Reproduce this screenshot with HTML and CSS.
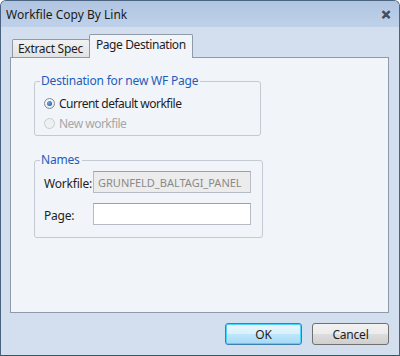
FILE: index.html
```html
<!DOCTYPE html>
<html>
<head>
<meta charset="utf-8">
<link rel="stylesheet" href="styles.css">
</head>
<body>
<div class="window">
  <div class="titlebar">
    <span class="title">Workfile Copy By Link</span>
    <span class="close">&#x2715;</span>
  </div>
  <div class="body">
    <div class="tabs">
      <div class="tab">Extract Spec</div>
      <div class="tab active">Page Destination</div>
    </div>
    <div class="panel">
      <div class="group g1">
        <div class="legend">Destination for new WF Page</div>
        <div class="radio-row">
          <span class="radio checked"><span class="dot"></span></span>
          <span class="rlabel">Current default workfile</span>
        </div>
        <div class="radio-row disabled">
          <span class="radio"></span>
          <span class="rlabel">New workfile</span>
        </div>
      </div>
      <div class="group g2">
        <div class="legend">Names</div>
        <div class="field-row">
          <span class="flabel">Workfile:</span>
          <span class="input readonly">GRUNFELD_BALTAGI_PANEL</span>
        </div>
        <div class="field-row">
          <span class="flabel">Page:</span>
          <span class="input"></span>
        </div>
      </div>
    </div>
    <div class="buttons">
      <div class="btn default">OK</div>
      <div class="btn">Cancel</div>
    </div>
  </div>
</div>
</body>
</html>
```
FILE: styles.css
```css
html, body {
  margin: 0;
  padding: 0;
  background: #ffffff;
}
body {
  font-family: "Noto Sans", "Open Sans", sans-serif;
  font-size: 12px;
  color: #1e1e1e;
}
.window {
  width: 400px;
  height: 356px;
  box-sizing: border-box;
  border: 1px solid #4a6480;
  border-bottom-color: #2e5a60;
  border-radius: 6px 6px 0 0;
  background: #d3dfef;
  display: flex;
  flex-direction: column;
  overflow: hidden;
}
.titlebar {
  height: 26px;
  flex: none;
  display: flex;
  align-items: center;
  justify-content: space-between;
  padding: 0 8px 0 5px;
  background: linear-gradient(to bottom, #b0c5e1, #bfd1ea);
}
.title {
  font-size: 12px;
  color: #1a1a1a;
}
.close {
  font-size: 12px;
  font-weight: bold;
  color: #3f5068;
  -webkit-text-stroke: 0.6px #3f5068;
}
.body {
  flex: 1;
  display: flex;
  flex-direction: column;
  padding: 7px 10px 0 9px;
}
.tabs {
  display: flex;
  align-items: flex-end;
  height: 23px;
  padding-left: 2px;
  position: relative;
  z-index: 1;
}
.tab {
  height: 18px;
  box-sizing: border-box;
  padding: 0 6px 0 5px;
  border: 1px solid #8e9aa8;
  border-bottom: none;
  border-radius: 2px 2px 0 0;
  background: linear-gradient(to bottom, #f2f2f2, #e2e2e2);
  display: flex;
  align-items: center;
  letter-spacing: -0.3px;
}
.tab.active {
  height: 24px;
  margin-bottom: -1px;
  padding: 0 6px 4px 6px;
  background: #f1f4f9;
  margin-left: -1px;
  letter-spacing: -0.4px;
}
.panel {
  height: 256px;
  box-sizing: border-box;
  border: 1px solid #8e9aa8;
  background: #f1f4f9;
  padding: 23px 0 0 23px;
  display: flex;
  flex-direction: column;
  gap: 24px;
}
.group {
  position: relative;
  box-sizing: border-box;
  border: 1px solid #c3cad4;
  border-radius: 3px;
  background: #f1f4f9;
}
.g1 {
  width: 227px;
  height: 55px;
  padding: 11px 0 0 9px;
}
.g2 {
  width: 229px;
  height: 78px;
  padding: 10px 0 0 8px;
}
.legend {
  position: absolute;
  top: -9px;
  left: 5px;
  padding: 0 2px 0 1px;
  background: #f1f4f9;
  color: #1e5cbc;
  line-height: 16px;
  letter-spacing: -0.2px;
}
.radio-row {
  display: flex;
  align-items: center;
  height: 20px;
  gap: 4px;
}
.radio {
  width: 11px;
  height: 11px;
  box-sizing: border-box;
  border-radius: 50%;
  border: 1px solid #7d8a99;
  background: radial-gradient(circle at 40% 35%, #ffffff, #dfe3e8);
  display: flex;
  align-items: center;
  justify-content: center;
}
.radio .dot {
  width: 5px;
  height: 5px;
  border-radius: 50%;
  background: radial-gradient(circle at 35% 35%, #6fa8e0, #1c4f8a);
}
.rlabel {
  letter-spacing: -0.5px;
}
.disabled .radio {
  border-color: #c8ccd2;
  background: #eef0f3;
}
.disabled .rlabel {
  color: #a7a7a7;
}
.field-row {
  display: flex;
  align-items: center;
  height: 22px;
  margin-bottom: 10px;
}
.flabel {
  width: 49px;
  letter-spacing: -0.2px;
  padding-left: 1px;
  padding-top: 2px;
}
.input {
  width: 158px;
  height: 22px;
  box-sizing: border-box;
  border: 1px solid #b5bcc6;
  border-top-color: #9aa1aa;
  background: #ffffff;
  display: flex;
  align-items: center;
  padding-left: 4px;
  font-size: 11px;
}
.input.readonly {
  background: #ececec;
  color: #8a8a8a;
}
.buttons {
  display: flex;
  justify-content: flex-end;
  gap: 10px;
  margin-top: 10px;
}
.btn {
  width: 77px;
  height: 22px;
  box-sizing: border-box;
  border: 1px solid #707070;
  border-radius: 3px;
  background: linear-gradient(to bottom, #f2f2f2 0%, #ebebeb 50%, #dddddd 51%, #cfcfcf 100%);
  display: flex;
  align-items: center;
  justify-content: center;
  letter-spacing: -0.2px;
}
.btn.default {
  border-color: #3c7fb1;
  background: linear-gradient(to bottom, #eaf6fd 0%, #d9f0fc 50%, #bee6fd 51%, #a7d9f5 100%);
  box-shadow: inset 0 0 0 1px #48d4fb;
}
```
